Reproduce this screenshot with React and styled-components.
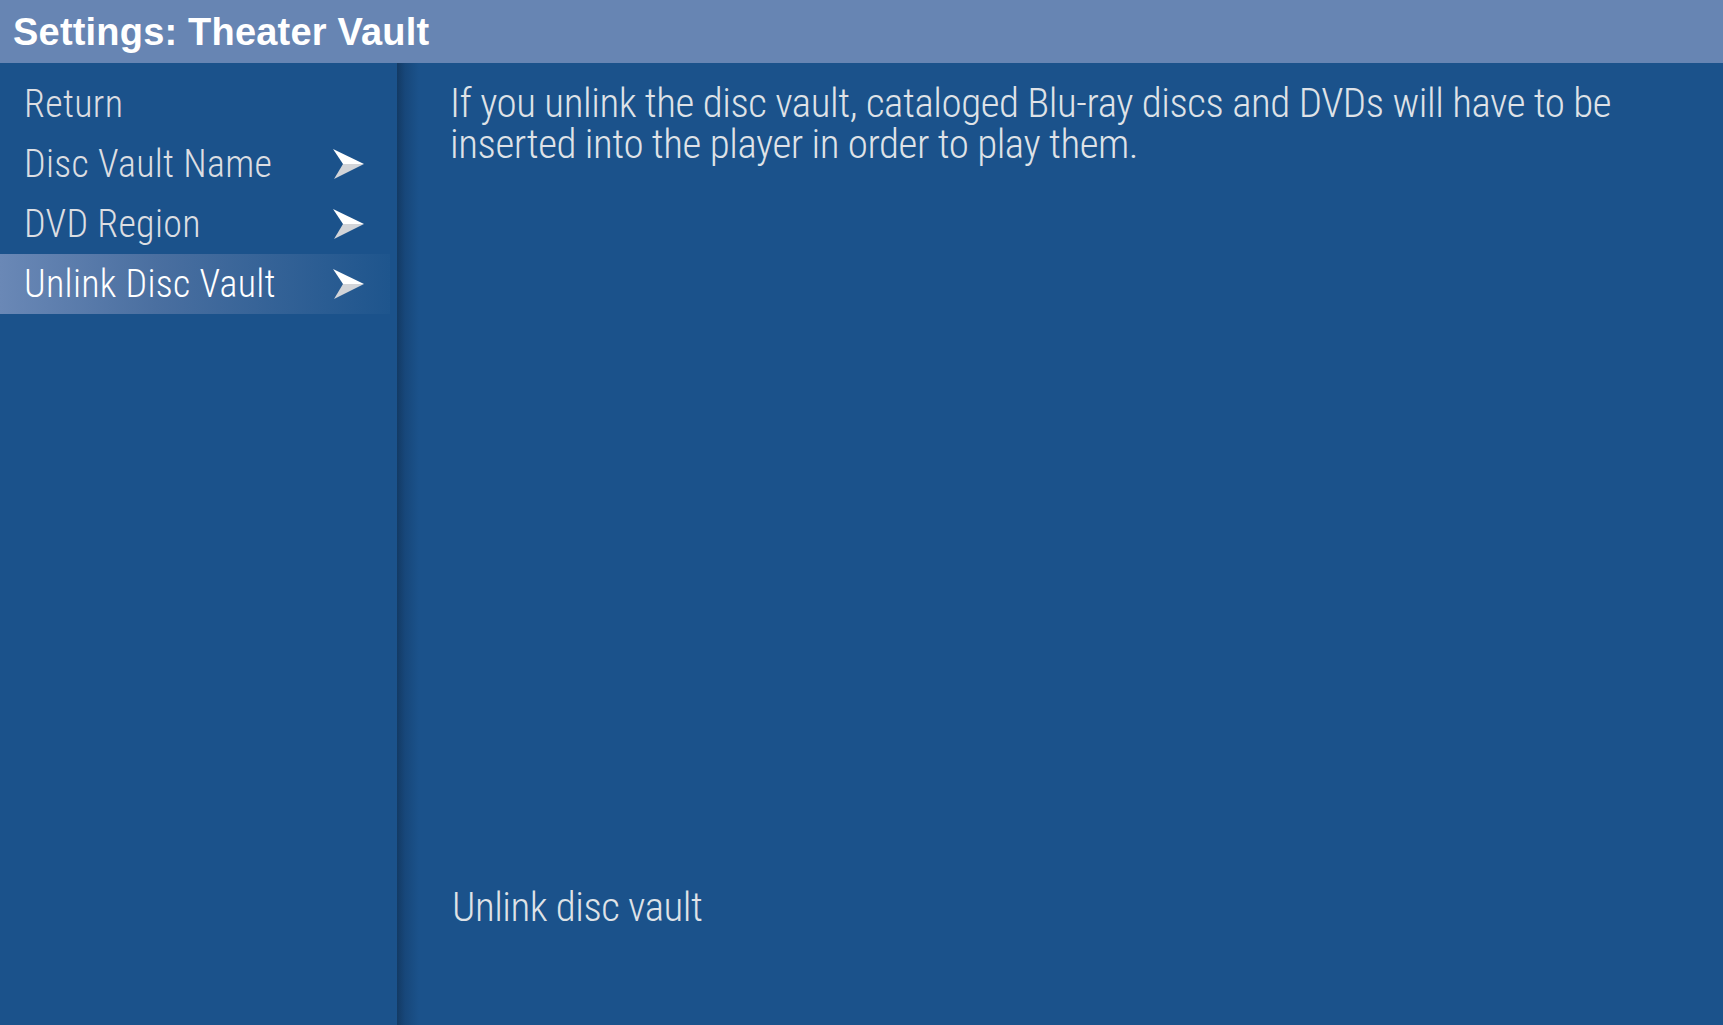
import React from "react";
import styled, { createGlobalStyle } from "styled-components";

const GlobalStyle = createGlobalStyle`
  html, body {
    margin: 0;
    padding: 0;
    width: 100%;
    height: 100%;
    overflow: hidden;
    background: #1b528b;
  }
  #root {
    height: 100%;
  }
`;

const NARROW = `"Roboto Condensed", "Liberation Sans Narrow", "DejaVu Sans Condensed", Roboto, sans-serif`;

const Screen = styled.div`
  display: flex;
  flex-direction: column;
  width: 1723px;
  height: 1025px;
  background: #1b528b;
`;

const Header = styled.header`
  flex: 0 0 63px;
  display: flex;
  align-items: center;
  padding-left: 13px;
  background: #6785b3;
`;

const Title = styled.h1`
  margin: 0;
  padding-top: 2px;
  font-family: "Liberation Sans", Arial, sans-serif;
  font-weight: 700;
  font-size: 38px;
  color: #ffffff;
  letter-spacing: 0.2px;
`;

const Body = styled.div`
  flex: 1;
  display: flex;
  min-height: 0;
`;

const Sidebar = styled.nav`
  flex: 0 0 397px;
  display: flex;
  flex-direction: column;
  padding-top: 11px;
  box-sizing: border-box;
`;

const MenuRow = styled.div`
  display: flex;
  align-items: center;
  justify-content: space-between;
  width: 390px;
  height: 60px;
  box-sizing: border-box;
  padding: 0 25px 0 24px;
  font-family: ${NARROW};
  font-weight: 300;
  font-size: 38px;
  letter-spacing: 0.3px;
  line-height: 60px;
  color: ${(p) => (p.$active ? "#ffffff" : "#dcdee2")};
  background: ${(p) =>
    p.$active
      ? "linear-gradient(to right, #6a88b6 0%, #4a6fa0 40%, #1e558d 100%)"
      : "transparent"};
`;

const Label = styled.span`
  white-space: nowrap;
`;

const ArrowSvg = styled.svg`
  flex: 0 0 auto;
  display: block;
`;

const Arrow = () => (
  <ArrowSvg width="32" height="30" viewBox="0 0 32 30">
    <polygon points="0,0 31,15 10,15" fill="#ffffff" />
    <polygon points="10,15 31,15 1,30" fill="#d2d4d8" />
  </ArrowSvg>
);

const Content = styled.main`
  flex: 1;
  display: flex;
  flex-direction: column;
  justify-content: space-between;
  padding: 20px 40px 94px 53px;
  background: linear-gradient(to right, #133a64 0px, #17477a 8px, #1b528b 22px);
`;

const Description = styled.p`
  margin: 0;
  max-width: 1200px;
  font-family: ${NARROW};
  font-weight: 300;
  font-size: 41px;
  letter-spacing: -0.45px;
  line-height: 41px;
  color: #dfe2e7;
`;

const ActionLabel = styled.div`
  padding-left: 2px;
  font-family: ${NARROW};
  font-weight: 300;
  font-size: 41px;
  letter-spacing: -0.5px;
  line-height: 48px;
  color: #dfe2e7;
`;

const items = [
  { label: "Return", arrow: false },
  { label: "Disc Vault Name", arrow: true },
  { label: "DVD Region", arrow: true },
  { label: "Unlink Disc Vault", arrow: true, active: true },
];

export default function App() {
  return (
    <>
      <GlobalStyle />
      <Screen>
        <Header>
          <Title>Settings: Theater Vault</Title>
        </Header>
        <Body>
          <Sidebar>
            {items.map((it) => (
              <MenuRow key={it.label} $active={it.active}>
                <Label>{it.label}</Label>
                {it.arrow && <Arrow />}
              </MenuRow>
            ))}
          </Sidebar>
          <Content>
            <Description>
              If you unlink the disc vault, cataloged Blu-ray discs and DVDs will have to be
              inserted into the player in order to play them.
            </Description>
            <ActionLabel>Unlink disc vault</ActionLabel>
          </Content>
        </Body>
      </Screen>
    </>
  );
}
